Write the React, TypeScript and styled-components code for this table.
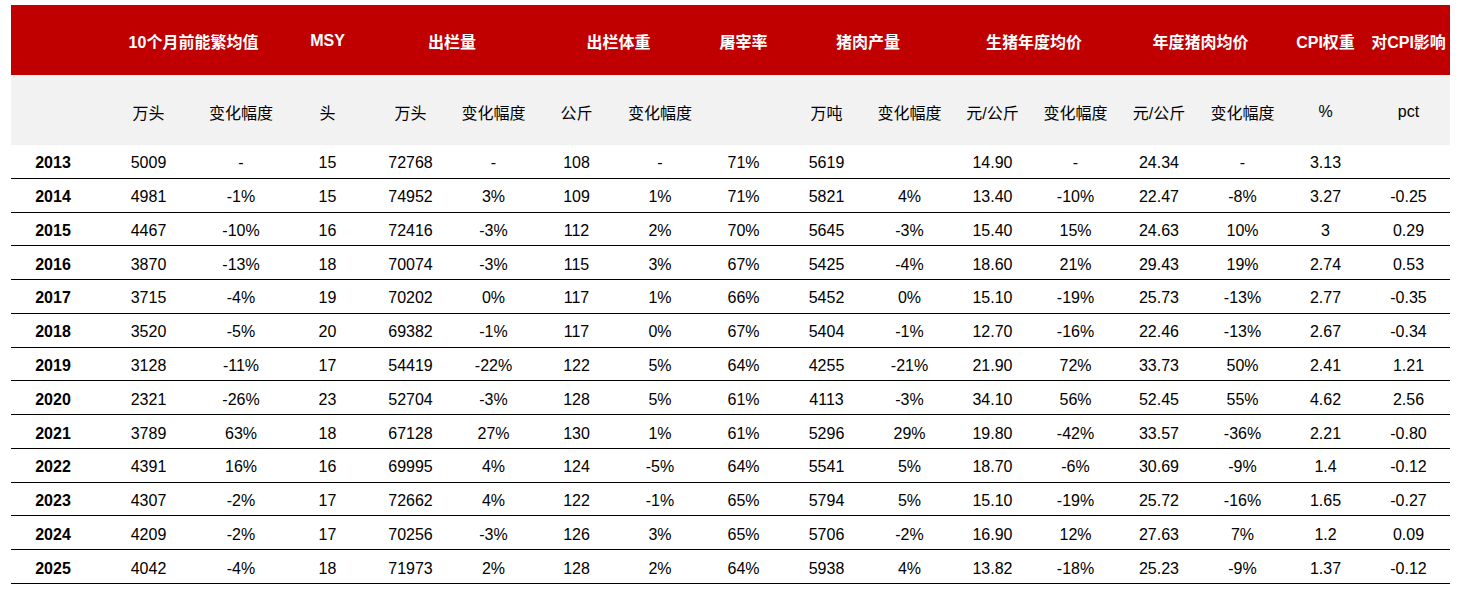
import styled, { createGlobalStyle } from "styled-components";

const GlobalStyle = createGlobalStyle`
  body {
    margin: 0;
    background: #ffffff;
    font-family: "Liberation Sans", Arial, "Noto Sans CJK SC", sans-serif;
  }
`;

const COLUMNS = "90px 95px 90px 83px 83px 83px 83px 84px 83px 83px 83px 83px 83px 84px 83px 83px 83px";

const groups = [
  { label: "", span: 1 },
  { label: "10个月前能繁均值", span: 2 },
  { label: "MSY", span: 1 },
  { label: "出栏量", span: 2 },
  { label: "出栏体重", span: 2 },
  { label: "屠宰率", span: 1 },
  { label: "猪肉产量", span: 2 },
  { label: "生猪年度均价", span: 2 },
  { label: "年度猪肉均价", span: 2 },
  { label: "CPI权重", span: 1 },
  { label: "对CPI影响", span: 1 },
];

const units = [
  "", "万头", "变化幅度", "头", "万头", "变化幅度", "公斤", "变化幅度", "",
  "万吨", "变化幅度", "元/公斤", "变化幅度", "元/公斤", "变化幅度", "%", "pct",
];

const rows: string[][] = [
  ["2013", "5009", "-", "15", "72768", "-", "108", "-", "71%", "5619", "", "14.90", "-", "24.34", "-", "3.13", ""],
  ["2014", "4981", "-1%", "15", "74952", "3%", "109", "1%", "71%", "5821", "4%", "13.40", "-10%", "22.47", "-8%", "3.27", "-0.25"],
  ["2015", "4467", "-10%", "16", "72416", "-3%", "112", "2%", "70%", "5645", "-3%", "15.40", "15%", "24.63", "10%", "3", "0.29"],
  ["2016", "3870", "-13%", "18", "70074", "-3%", "115", "3%", "67%", "5425", "-4%", "18.60", "21%", "29.43", "19%", "2.74", "0.53"],
  ["2017", "3715", "-4%", "19", "70202", "0%", "117", "1%", "66%", "5452", "0%", "15.10", "-19%", "25.73", "-13%", "2.77", "-0.35"],
  ["2018", "3520", "-5%", "20", "69382", "-1%", "117", "0%", "67%", "5404", "-1%", "12.70", "-16%", "22.46", "-13%", "2.67", "-0.34"],
  ["2019", "3128", "-11%", "17", "54419", "-22%", "122", "5%", "64%", "4255", "-21%", "21.90", "72%", "33.73", "50%", "2.41", "1.21"],
  ["2020", "2321", "-26%", "23", "52704", "-3%", "128", "5%", "61%", "4113", "-3%", "34.10", "56%", "52.45", "55%", "4.62", "2.56"],
  ["2021", "3789", "63%", "18", "67128", "27%", "130", "1%", "61%", "5296", "29%", "19.80", "-42%", "33.57", "-36%", "2.21", "-0.80"],
  ["2022", "4391", "16%", "16", "69995", "4%", "124", "-5%", "64%", "5541", "5%", "18.70", "-6%", "30.69", "-9%", "1.4", "-0.12"],
  ["2023", "4307", "-2%", "17", "72662", "4%", "122", "-1%", "65%", "5794", "5%", "15.10", "-19%", "25.72", "-16%", "1.65", "-0.27"],
  ["2024", "4209", "-2%", "17", "70256", "-3%", "126", "3%", "65%", "5706", "-2%", "16.90", "12%", "27.63", "7%", "1.2", "0.09"],
  ["2025", "4042", "-4%", "18", "71973", "2%", "128", "2%", "64%", "5938", "4%", "13.82", "-18%", "25.23", "-9%", "1.37", "-0.12"],
];

export default function App() {
  return (
    <>
      <GlobalStyle />
      <Page>
        <Table>
          <GroupRow>
            {groups.map((g, i) => (
              <GroupCell key={i} $span={g.span}>
                {g.label}
              </GroupCell>
            ))}
          </GroupRow>
          <UnitRow>
            {units.map((u, i) => (
              <UnitCell key={i}>{u}</UnitCell>
            ))}
          </UnitRow>
          {rows.map((r) => (
            <DataRow key={r[0]}>
              {r.map((v, i) =>
                i === 0 ? <YearCell key={i}>{v}</YearCell> : <Cell key={i}>{v}</Cell>
              )}
            </DataRow>
          ))}
        </Table>
      </Page>
    </>
  );
}

const Page = styled.div`
  padding: 5px 0 0 11px;
`;

const Table = styled.div`
  width: 1439px;
  display: flex;
  flex-direction: column;
`;

const RowBase = styled.div`
  display: grid;
  grid-template-columns: ${COLUMNS};
  align-items: center;
`;

const GroupRow = styled(RowBase)`
  height: 70px;
  background: #c00000;
  padding-top: 2px;
  box-sizing: border-box;
`;

const GroupCell = styled.div<{ $span: number }>`
  grid-column: span ${(p) => p.$span};
  text-align: center;
  color: #ffffff;
  font-weight: bold;
  font-size: 16px;
  white-space: nowrap;
`;

const UnitRow = styled(RowBase)`
  height: 70px;
  background: #f2f2f2;
  padding-top: 3px;
  box-sizing: border-box;
`;

const UnitCell = styled.div`
  text-align: center;
  color: #000000;
  font-size: 16px;
  white-space: nowrap;
`;

const DataRow = styled(RowBase)`
  height: 33.77px;
  box-sizing: border-box;
  padding-top: 4px;
  border-bottom: 1px solid #000000;
`;

const Cell = styled.div`
  text-align: center;
  color: #000000;
  font-size: 16px;
  white-space: nowrap;
`;

const YearCell = styled(Cell)`
  font-weight: bold;
  padding-right: 6px;
`;
